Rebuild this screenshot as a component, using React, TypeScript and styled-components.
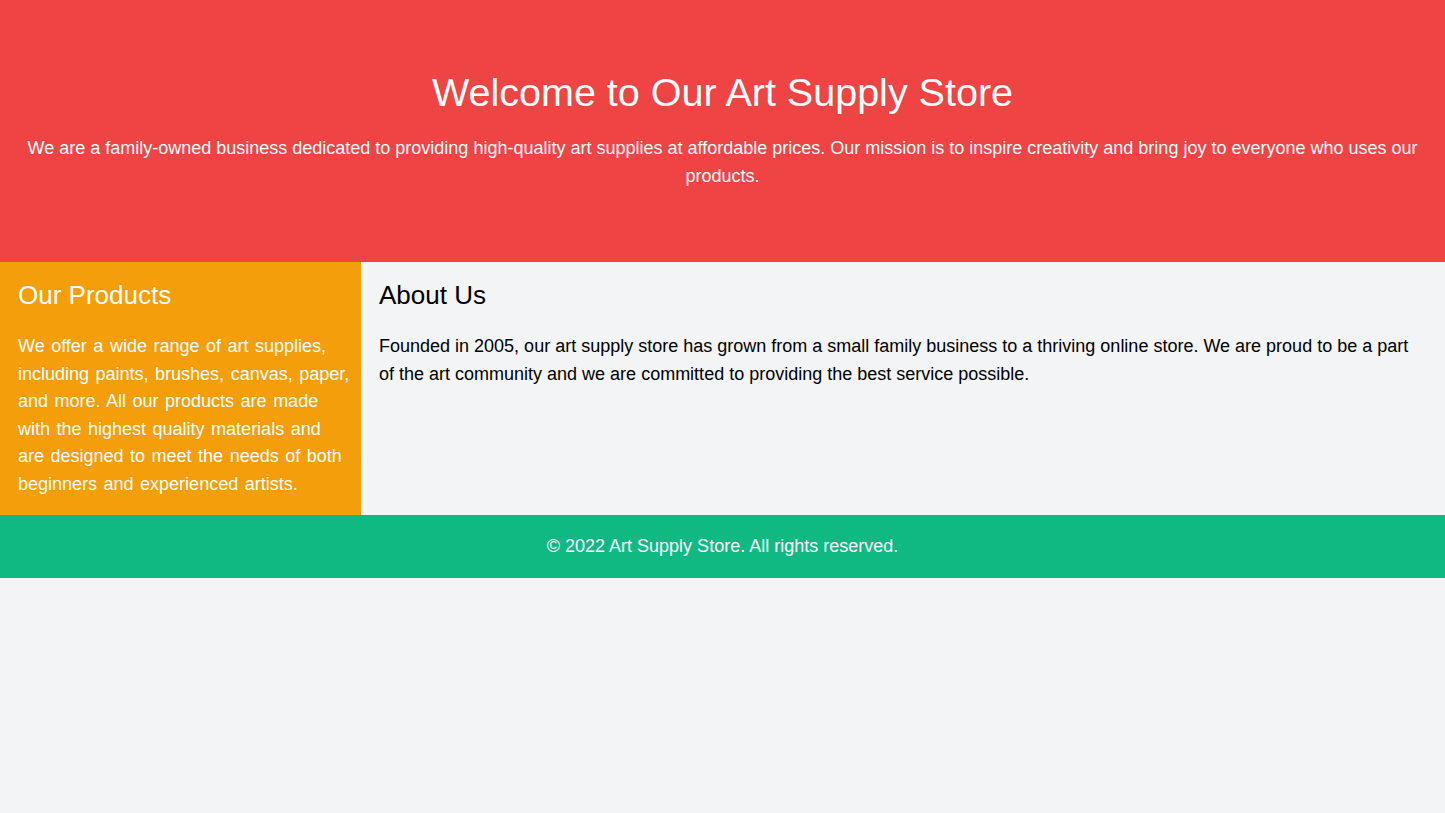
import React from "react";
import styled, { createGlobalStyle } from "styled-components";

const GlobalStyle = createGlobalStyle`
  html, body {
    margin: 0;
    padding: 0;
    background: #f3f4f6;
    font-family: "Liberation Sans", Arial, sans-serif;
    color: #000;
  }
  * { box-sizing: border-box; }
`;

const Page = styled.div`
  display: flex;
  flex-direction: column;
  min-height: 813px;
  background: #f3f4f6;
`;

const Hero = styled.header`
  background: #ef4444;
  color: #fff;
  padding: 72px 16px;
  text-align: center;
`;

const HeroTitle = styled.h1`
  margin: 0 0 22px;
  font-size: 39.5px;
  line-height: 40px;
  font-weight: 400;
`;

const HeroText = styled.p`
  margin: 0;
  font-size: 18px;
  line-height: 28px;
`;

const Content = styled.div`
  display: grid;
  grid-template-columns: 361px 1fr;
`;

const Panel = styled.section<{ $bg: string; $fg: string; $padRight: number }>`
  background: ${(p) => p.$bg};
  color: ${(p) => p.$fg};
  padding: 17px ${(p) => p.$padRight}px 17px 18px;
`;

const PanelTitle = styled.h2`
  margin: 0 0 22px;
  font-size: 26px;
  line-height: 32px;
  font-weight: 400;
`;

const PanelText = styled.p<{ $wordSpacing?: number }>`
  margin: 0;
  font-size: 18px;
  line-height: 27.5px;
  word-spacing: ${(p) => p.$wordSpacing ?? 0}px;
`;

const Footer = styled.footer`
  background: #10b981;
  color: #fff;
  height: 63px;
  display: flex;
  align-items: center;
  justify-content: center;
  font-size: 18px;
`;

export default function App() {
  return (
    <>
      <GlobalStyle />
      <Page>
        <Hero>
          <HeroTitle>Welcome to Our Art Supply Store</HeroTitle>
          <HeroText>
            We are a family-owned business dedicated to providing high-quality art supplies at affordable
            prices. Our mission is to inspire creativity and bring joy to everyone who uses our products.
          </HeroText>
        </Hero>
        <Content>
          <Panel $bg="#f59e0b" $fg="#fff" $padRight={10}>
            <PanelTitle>Our Products</PanelTitle>
            <PanelText $wordSpacing={1.5}>
              We offer a wide range of art supplies, including paints, brushes, canvas, paper, and more. All
              our products are made with the highest quality materials and are designed to meet the needs of
              both beginners and experienced artists.
            </PanelText>
          </Panel>
          <Panel $bg="#f3f4f6" $fg="#000" $padRight={22}>
            <PanelTitle>About Us</PanelTitle>
            <PanelText>
              Founded in 2005, our art supply store has grown from a small family business to a thriving
              online store. We are proud to be a part of the art community and we are committed to providing
              the best service possible.
            </PanelText>
          </Panel>
        </Content>
        <Footer>© 2022 Art Supply Store. All rights reserved.</Footer>
      </Page>
    </>
  );
}
